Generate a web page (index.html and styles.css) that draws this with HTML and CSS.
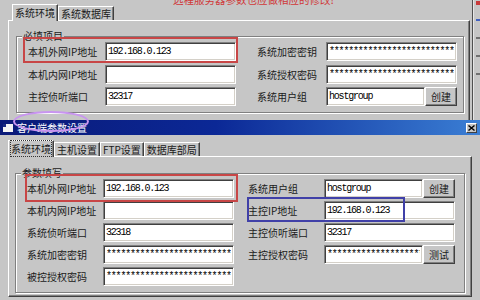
FILE: index.html
```html
<!doctype html>
<html lang="zh-CN">
<head>
    <meta charset="UTF-8">
    <title>客户端参数设置</title>
    <link rel="stylesheet" href="styles.css">
</head>
<body>
    <div class="screen">
        <!-- 上面一张截图：服务端 -->
        <div class="old">
            <div class="old-main">
                <div class="notice"><span>远程服务器参数也应做相应的修改!</span></div>
                <div class="tabs">
                    <div class="tab on">系统环境</div>
                    <div class="tab">系统数据库</div>
                </div>
                <div class="panel">
                    <fieldset class="group">
                        <legend>必填项目</legend>
                        <div class="rows rows-old">
                            <label>本机外网IP地址</label>
                            <input class="field" value="192.168.0.123">
                            <label class="r">系统加密密钥</label>
                            <input class="field" value="******************************">

                            <label>本机内网IP地址</label>
                            <input class="field" value="">
                            <label class="r">系统授权密码</label>
                            <input class="field" value="******************************">

                            <label>主控侦听端口</label>
                            <input class="field" value="32317">
                            <label class="r">系统用户组</label>
                            <div class="combo">
                                <input class="field" value="hostgroup">
                                <div class="btn">创建</div>
                            </div>
                        </div>
                    </fieldset>
                </div>
            </div>
            <div class="old-edge">
                <i class="m red"></i>
                <i class="m blue"></i>
                <i class="m dark"></i>
                <i class="m dark"></i>
                <i class="m dark"></i>
            </div>
        </div>

        <!-- 下面一张截图：客户端 -->
        <div class="win">
            <div class="titlebar">
                <svg class="icon" width="10" height="8" viewBox="0 0 10 8">
                    <rect x="0" y="0" width="10" height="8" fill="#f4f4f4"/>
                    <rect x="0" y="0" width="3" height="3" fill="#1a2a80"/>
                </svg>
                <span class="title">客户端参数设置</span>
                <div class="close">
                    <svg width="7" height="6" viewBox="0 0 7 6">
                        <path d="M0.5 0.5 L6.5 5.5 M6.5 0.5 L0.5 5.5" stroke="#000" stroke-width="1.4"/>
                    </svg>
                </div>
            </div>
            <div class="win-body">
                <div class="tabs">
                    <div class="tab on"><span class="focus">系统环境</span></div>
                    <div class="tab">主机设置</div>
                    <div class="tab">FTP设置</div>
                    <div class="tab">数据库部局</div>
                </div>
                <div class="panel">
                    <fieldset class="group">
                        <legend>参数填写</legend>
                        <div class="rows rows-new">
                            <label>本机外网IP地址</label>
                            <input class="field" value="192.168.0.123">
                            <label class="r">系统用户组</label>
                            <div class="combo">
                                <input class="field" value="hostgroup">
                                <div class="btn">创建</div>
                            </div>

                            <label>本机内网IP地址</label>
                            <input class="field" value="">
                            <label class="r">主控IP地址</label>
                            <input class="field" value="192.168.0.123">

                            <label>系统侦听端口</label>
                            <input class="field" value="32318">
                            <label class="r">主控侦听端口</label>
                            <input class="field" value="32317">

                            <label>系统加密密钥</label>
                            <input class="field" value="******************************">
                            <label class="r">主控授权密码</label>
                            <div class="combo">
                                <input class="field" value="**********************">
                                <div class="btn">测试</div>
                            </div>

                            <label>被控授权密码</label>
                            <input class="field" value="******************************">
                        </div>
                    </fieldset>
                </div>
            </div>
        </div>

        <!-- 标注框 -->
        <div class="mark red-box top-box"></div>
        <div class="mark red-box bottom-box"></div>
        <div class="mark blue-box"></div>
        <div class="mark ellipse"></div>
    </div>
</body>
</html>
```

FILE: styles.css
```css
*{margin: 0;padding: 0;box-sizing: border-box}
body{
    width: 480px;
    height: 300px;
    overflow: hidden;
    background: #c6c6c6;
    font-family: "Noto Sans CJK SC", "Noto Sans", sans-serif;
    font-size: 10px;
    color: #1a1a1a;
}
.screen{
    position: relative;
    width: 480px;
    height: 300px;
}

/* 上半部分 */
.old{
    display: flex;
    height: 120px;
    overflow: hidden;
}
.old-main{
    width: 472px;
    padding-left: 8px;
}
.notice{
    height: 5px;
    overflow: hidden;
    margin-left: -8px;
}
.notice span{
    display: block;
    margin-top: -6px;
    padding-left: 173px;
    font-size: 10.5px;
    line-height: 11px;
    color: #d03838;
    white-space: nowrap;
}
.old .tabs{padding-left: 4px;height: 15px}
.old .panel{
    width: 462px;
    height: 200px;
    padding: 9px 5px 0 7px;
}
.old-edge{
    flex: 1;
    border-left: 1px solid #505050;
    box-shadow: inset 1px 0 #e6e6e6;
    padding-left: 3px;
}
.old-edge .m{
    display: block;
    width: 4px;
    height: 2px;
    margin-top: 14px;
}
.old-edge .m.red{background: #c83a3a;margin-top: 1px;height: 4px}
.old-edge .m.blue{background: #4060c0}
.old-edge .m.dark{background: #707070;margin-top: 16px}

/* 标签页 */
.tabs{
    display: flex;
    align-items: flex-end;
    height: 16px;
}
.tab{
    height: 14px;
    line-height: 13px;
    padding: 0 2px;
    border: 1px solid;
    border-bottom: 0;
    border-color: #fff #404040 transparent #fff;
    box-shadow: inset -1px 0 #808080;
    white-space: nowrap;
}
.tab.on{
    height: 17px;
    line-height: 15px;
    margin-bottom: -1px;
    background: #c6c6c6;
    position: relative;
    z-index: 1;
}
.tab .focus{outline: 1px dotted #333;outline-offset: 0}

.panel{
    border: 1px solid;
    border-color: #fff #404040 #404040 #fff;
    box-shadow: inset -1px -1px #808080;
}

/* 分组框 */
.group{
    border: 1px solid #808080;
    box-shadow: inset 1px 1px #fff, 1px 1px #fff;
    padding: 0 6px 6px 11px;
}
.group legend{
    margin-left: -6px;
    padding: 0 1px;
    line-height: 12px;
    background: #c6c6c6;
    position: relative;
}

.rows{
    display: grid;
    align-items: center;
    grid-auto-rows: 19px;
}
.rows-old{
    grid-template-columns: 77px 131px 21px 69px 131px;
    row-gap: 3.5px;
}
.rows-new{
    grid-template-columns: 76px 131px 14px 76px 131px;
    row-gap: 3px;
}
.rows label{white-space: nowrap}
.rows .r{grid-column-start: 4}

.field{
    display: block;
    width: 100%;
    height: 19px;
    border: 1px solid;
    border-color: #808080 #fff #fff #808080;
    box-shadow: inset 1px 1px #404040, inset -1px -1px #d4d0c8;
    background: #fff;
    padding: 0 2px;
    font: 10px/17px "Liberation Mono", monospace;
    letter-spacing: -1.2px;
    color: #000;
    outline: none;
}
.combo{display: flex}
.combo .field{flex: 1;min-width: 0}
.btn{
    width: 32px;
    height: 19px;
    border: 1px solid;
    border-color: #fff #404040 #404040 #fff;
    box-shadow: inset -1px -1px #808080;
    background: #c6c6c6;
    display: flex;
    align-items: center;
    justify-content: center;
}

/* 下半部分窗口 */
.win{height: 180px}
.titlebar{
    height: 15px;
    display: flex;
    align-items: center;
    padding: 0 3px;
    background: linear-gradient(90deg, #0a1a78, #0b2896 45%, #3a7ed4);
    color: #fff;
}
.titlebar .icon{display: block}
.titlebar .title{
    flex: 1;
    margin-left: 4px;
    line-height: 15px;
}
.close{
    width: 11px;
    height: 10px;
    background: #c6c6c6;
    border: 1px solid;
    border-color: #fff #404040 #404040 #fff;
    display: flex;
    align-items: center;
    justify-content: center;
}
.win-body{padding: 5px 8px 0 8px}
.win .panel{padding: 10px 6px 3px 6px}

/* 标注 */
.mark{position: absolute}
.red-box{border: 2px solid #c84646}
.top-box{left: 23px;top: 37px;width: 215px;height: 26px}
.bottom-box{left: 25px;top: 174px;width: 213px;height: 28px}
.blue-box{
    left: 247px;
    top: 197px;
    width: 158px;
    height: 25px;
    border: 2px solid #4040a8;
}
.ellipse{
    left: 13px;
    top: 111px;
    width: 76px;
    height: 21px;
    border: 2px solid #c894f0;
    border-radius: 50%;
}
```
